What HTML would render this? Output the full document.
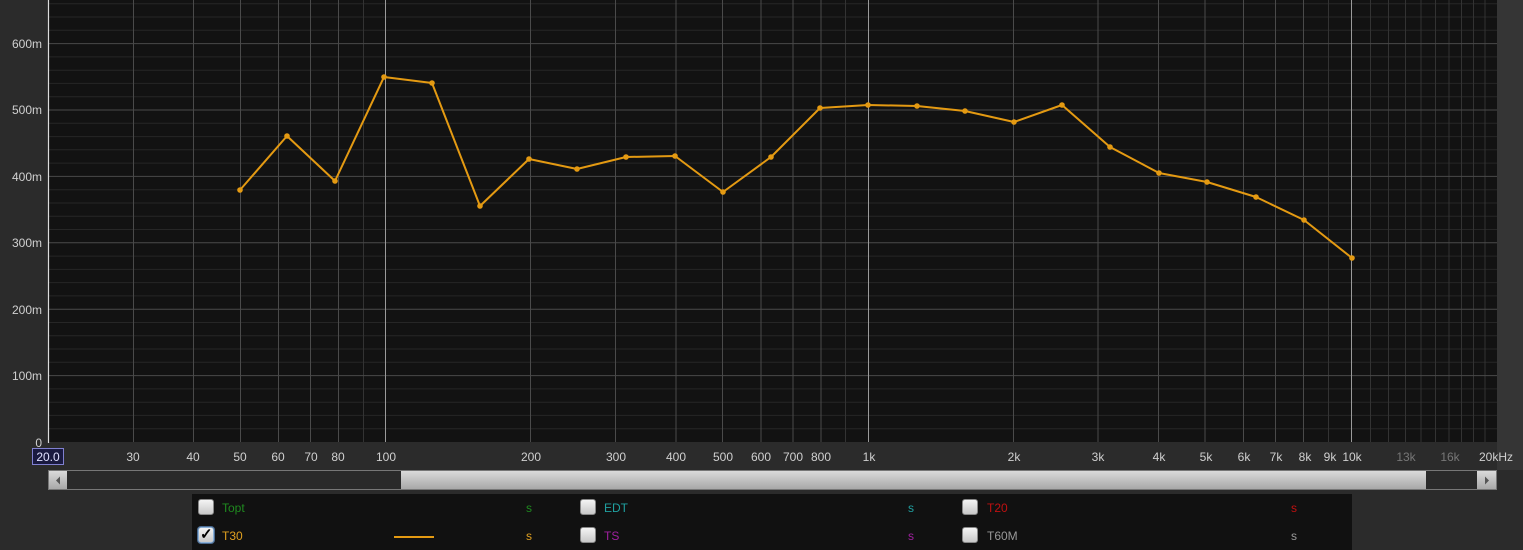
<!DOCTYPE html>
<html><head><meta charset="utf-8"><style>
html,body{margin:0;padding:0;width:1523px;height:550px;overflow:hidden;background:#2b2b2b;font-family:"Liberation Sans",sans-serif}
svg{position:absolute;left:0;top:0}
.leg{position:absolute;left:192px;top:494px;width:1160px;height:56px;background:#111}
.cb{position:absolute;width:14px;height:14px;border-radius:3px;background:linear-gradient(#f4f4f4,#c8c8c8);border:1px solid #888}
.t{position:absolute;font-size:12px}
</style></head><body>
<svg width="1523" height="550" viewBox="0 0 1523 550">
<rect x="48" y="0" width="1449" height="442" fill="#121212"/>
<rect x="1497" y="0" width="26" height="470" fill="#353535"/>
<g stroke="#262626" stroke-width="1">
<path d="M48 428.7H1497M48 415.4H1497M48 402.2H1497M48 388.9H1497M48 362.3H1497M48 349H1497M48 335.8H1497M48 322.5H1497M48 295.9H1497M48 282.6H1497M48 269.4H1497M48 256.1H1497M48 229.5H1497M48 216.2H1497M48 203H1497M48 189.7H1497M48 163.1H1497M48 149.8H1497M48 136.6H1497M48 123.3H1497M48 96.7H1497M48 83.4H1497M48 70.2H1497M48 56.9H1497M48 30.3H1497M48 17H1497M48 3.8H1497"/>
</g>
<g stroke="#333" stroke-width="1">
<path d="M363.5 0V442M845.5 0V442M1328.5 0V442M1370.5 0V442M1388.5 0V442M1405.5 0V442M1421 0V442M1435.5 0V442M1449 0V442M1461.5 0V442M1473.5 0V442M1485 0V442"/>
</g>
<g stroke="#4a4a4a" stroke-width="1">
<path d="M48 375.6H1497M48 309.2H1497M48 242.8H1497M48 176.4H1497M48 110H1497M48 43.6H1497"/>
<path d="M133.5 0V442M193.5 0V442M240.5 0V442M278.5 0V442M310.5 0V442M338.5 0V442M530.5 0V442M615.5 0V442M676 0V442M722.5 0V442M761 0V442M793 0V442M821 0V442M1013.5 0V442M1098 0V442M1158.5 0V442M1205 0V442M1243.5 0V442M1275.5 0V442M1303.5 0V442"/>
</g>
<g stroke="#9a9a9a" stroke-width="1"><path d="M385.5 0V442M868.5 0V442M1351.5 0V442"/></g>
<path d="M48.5 0V443" stroke="#dcdcdc" stroke-width="1.2"/>
<polyline fill="none" stroke="#e49a12" stroke-width="2" stroke-linejoin="round" points="240,190 287,136 335,181 384,77 432,83 480,206 529,159 577,169 626,157 675,156 723,192 771,157 820,108 868,105 917,106 965,111 1014,122 1062,105 1110,147 1159,173 1207,182 1256,197 1304,220 1352,258"/>
<g fill="#e49a12">
<circle cx="240" cy="190" r="2.8"/><circle cx="287" cy="136" r="2.8"/><circle cx="335" cy="181" r="2.8"/><circle cx="384" cy="77" r="2.8"/><circle cx="432" cy="83" r="2.8"/><circle cx="480" cy="206" r="2.8"/><circle cx="529" cy="159" r="2.8"/><circle cx="577" cy="169" r="2.8"/><circle cx="626" cy="157" r="2.8"/><circle cx="675" cy="156" r="2.8"/><circle cx="723" cy="192" r="2.8"/><circle cx="771" cy="157" r="2.8"/><circle cx="820" cy="108" r="2.8"/><circle cx="868" cy="105" r="2.8"/><circle cx="917" cy="106" r="2.8"/><circle cx="965" cy="111" r="2.8"/><circle cx="1014" cy="122" r="2.8"/><circle cx="1062" cy="105" r="2.8"/><circle cx="1110" cy="147" r="2.8"/><circle cx="1159" cy="173" r="2.8"/><circle cx="1207" cy="182" r="2.8"/><circle cx="1256" cy="197" r="2.8"/><circle cx="1304" cy="220" r="2.8"/><circle cx="1352" cy="258" r="2.8"/>
</g>
<g font-family="Liberation Sans, sans-serif" font-size="12" fill="#d0d0d0" text-anchor="end">
<text x="42" y="48">600m</text><text x="42" y="114">500m</text><text x="42" y="181">400m</text><text x="42" y="247">300m</text><text x="42" y="314">200m</text><text x="42" y="380">100m</text><text x="42" y="447">0</text>
</g>
<rect x="32.5" y="448.5" width="31" height="16" fill="#1a1a40" stroke="#8080d0"/>
<g font-family="Liberation Sans, sans-serif" font-size="12" fill="#d0d0d0" text-anchor="middle">
<text x="48" y="461" fill="#e0e0ff">20.0</text>
<text x="133" y="461">30</text><text x="193" y="461">40</text><text x="240" y="461">50</text><text x="278" y="461">60</text><text x="311" y="461">70</text><text x="338" y="461">80</text><text x="386" y="461">100</text>
<text x="531" y="461">200</text><text x="616" y="461">300</text><text x="676" y="461">400</text><text x="723" y="461">500</text><text x="761" y="461">600</text><text x="793" y="461">700</text><text x="821" y="461">800</text><text x="869" y="461">1k</text>
<text x="1014" y="461">2k</text><text x="1098" y="461">3k</text><text x="1159" y="461">4k</text><text x="1206" y="461">5k</text><text x="1244" y="461">6k</text><text x="1276" y="461">7k</text><text x="1305" y="461">8k</text><text x="1330" y="461">9k</text><text x="1352" y="461">10k</text>
<text x="1406" y="461" fill="#777">13k</text><text x="1450" y="461" fill="#777">16k</text><text x="1496" y="461">20kHz</text>
</g>
<defs><linearGradient id="th" x1="0" y1="0" x2="0" y2="1"><stop offset="0" stop-color="#dadada"/><stop offset="1" stop-color="#a8a8a8"/></linearGradient></defs>
<rect x="48" y="470" width="1449" height="20" fill="#777"/>
<rect x="49" y="471" width="1447" height="18" fill="#2a2a2a"/>
<rect x="49" y="471" width="18" height="18" fill="url(#th)"/>
<rect x="401" y="471" width="1025" height="18" fill="url(#th)"/>
<rect x="1477" y="471" width="19" height="18" fill="url(#th)"/>
<path d="M60 476.5L56 480.5L60 484.5Z" fill="#555"/>
<path d="M1485 476.5L1489 480.5L1485 484.5Z" fill="#555"/>
</svg>
<div class="leg">
<div class="cb" style="left:6px;top:5px"></div><div class="t" style="left:30px;top:7px;color:#1f8a1f">Topt</div><div class="t" style="left:334px;top:7px;color:#1f8a1f">s</div>
<div class="cb" style="left:6px;top:33px;border-color:#8ab0d8;box-shadow:0 0 0 1px #4a6a90"><span style="position:absolute;left:1px;top:-3px;font-size:15px;color:#000;font-weight:bold">✓</span></div><div class="t" style="left:30px;top:35px;color:#e0a020">T30</div>
<div style="position:absolute;left:202px;top:42px;width:40px;height:2px;background:#e49a12"></div><div class="t" style="left:334px;top:35px;color:#e0a020">s</div>
<div class="cb" style="left:388px;top:5px"></div><div class="t" style="left:412px;top:7px;color:#20a0a0">EDT</div><div class="t" style="left:716px;top:7px;color:#20a0a0">s</div>
<div class="cb" style="left:388px;top:33px"></div><div class="t" style="left:412px;top:35px;color:#a020a0">TS</div><div class="t" style="left:716px;top:35px;color:#a020a0">s</div>
<div class="cb" style="left:770px;top:5px"></div><div class="t" style="left:795px;top:7px;color:#c01010">T20</div><div class="t" style="left:1099px;top:7px;color:#c01010">s</div>
<div class="cb" style="left:770px;top:33px"></div><div class="t" style="left:795px;top:35px;color:#999">T60M</div><div class="t" style="left:1099px;top:35px;color:#999">s</div>
</div>
</body></html>
